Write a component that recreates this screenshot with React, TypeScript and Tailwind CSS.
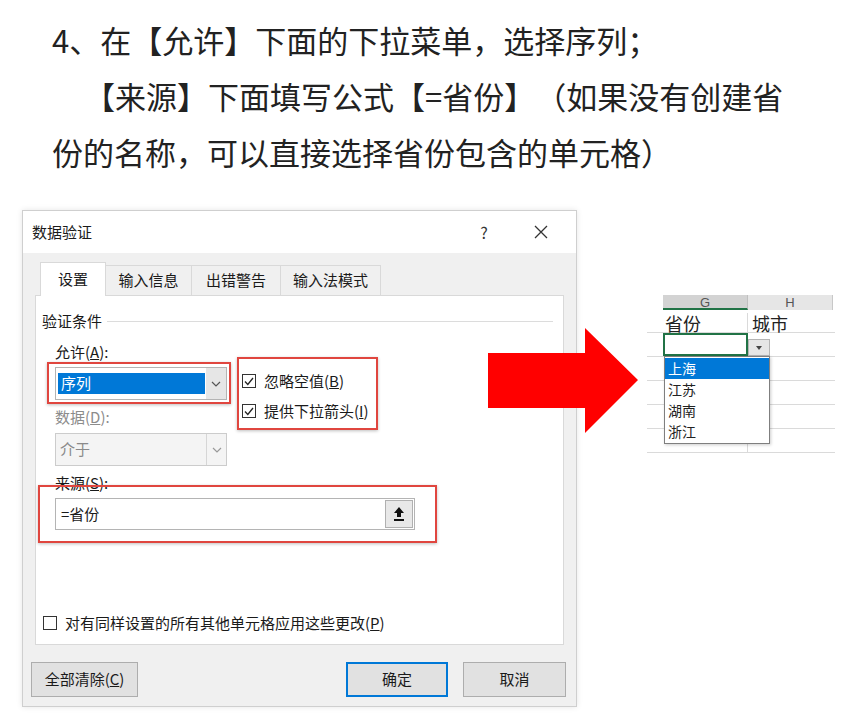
import React from "react";

const sheetRows = [0, 1, 2, 3];
const options = ["上海", "江苏", "湖南", "浙江"];

function Chevron({ color = "#555" }: { color?: string }) {
  return (
    <svg width="10" height="6" viewBox="0 0 10 6" fill="none">
      <path d="M1 1l4 4 4-4" stroke={color} strokeWidth="1.2" />
    </svg>
  );
}

function Check() {
  return (
    <span className="flex h-[14px] w-[14px] items-center justify-center border border-[#333] bg-white">
      <svg width="10" height="9" viewBox="0 0 10 9" fill="none">
        <path d="M1 4.5l2.8 3L9 1" stroke="#222" strokeWidth="1.3" />
      </svg>
    </span>
  );
}

function RedBox({ className }: { className: string }) {
  return (
    <div
      className={`pointer-events-none absolute border-2 border-[#e0463f] shadow-[0_1px_3px_rgba(0,0,0,0.25)] ${className}`}
    />
  );
}

function Dialog() {
  return (
    <div className="ml-[22px] flex h-[497px] w-[555px] shrink-0 flex-col border border-[#cfcfcf] bg-[#f0f0f0] text-[15px] text-[#1a1a1a] shadow-[0_0_6px_rgba(0,0,0,0.1)]">
      <div className="flex h-[42px] shrink-0 items-center bg-white pl-[9px]">
        <span>数据验证</span>
        <span className="ml-auto mr-[32px] w-[20px] text-center text-[16px] text-[#333]">?</span>
        <span className="mr-[20px] flex w-[30px] justify-center">
          <svg width="14" height="14" viewBox="0 0 14 14">
            <path d="M1 1l12 12M13 1L1 13" stroke="#333" strokeWidth="1.3" />
          </svg>
        </span>
      </div>

      <div className="ml-[12px] mt-[9px] w-[529px]">
        <div className="flex h-[33px] items-end pl-[5px]">
          <div className="relative z-10 -mb-px flex h-[34px] w-[66px] items-center justify-center border border-b-0 border-[#d9d9d9] bg-white">
            设置
          </div>
          <div className="flex h-[30px] w-[86px] items-center justify-center border-r border-t border-[#d9d9d9]">
            输入信息
          </div>
          <div className="flex h-[30px] w-[89px] items-center justify-center border-r border-t border-[#d9d9d9]">
            出错警告
          </div>
          <div className="flex h-[30px] w-[100px] items-center justify-center border-r border-t border-[#d9d9d9]">
            输入法模式
          </div>
        </div>

        <div className="flex h-[350px] flex-col border border-[#d9d9d9] bg-white">
          <div className="mt-[15px] flex h-[20px] items-center pl-[6px] pr-[10px]">
            <span>验证条件</span>
            <div className="ml-[5px] h-px flex-1 bg-[#dcdcdc]" />
          </div>

          <div className="mt-[11px] flex pl-[19px]">
            <div className="flex w-[172px] flex-col">
              <div className="flex h-[20px] items-center">
                允许(<span className="underline">A</span>):
              </div>
              <div className="relative mt-[5px]">
                <div className="flex h-[33px] items-center border border-[#b4b4b4] bg-white">
                  <span className="ml-[2px] flex h-[21px] flex-1 items-center bg-[#0078d7] pl-[3px] text-white">
                    序列
                  </span>
                  <span className="ml-[1px] flex w-[20px] items-center justify-center self-stretch bg-[#e6e6e6]">
                    <Chevron />
                  </span>
                </div>
                <RedBox className="-bottom-[4px] -left-[8px] -right-[4px] -top-[5px]" />
              </div>
              <div className="mt-[7px] flex h-[20px] items-center text-[#8c8c8c]">
                数据(<span className="underline">D</span>):
              </div>
              <div className="mt-[6px] flex h-[33px] items-center border border-[#cccccc] bg-[#f4f4f4]">
                <span className="flex-1 pl-[4px] text-[#8a8a8a]">介于</span>
                <span className="flex w-[20px] items-center justify-center self-stretch border-l border-[#d6d6d6]">
                  <Chevron color="#9a9a9a" />
                </span>
              </div>
            </div>

            <div className="relative ml-[15px] mt-[29px] flex h-[50px] w-[130px] flex-col gap-[10px]">
              <div className="flex h-[20px] items-center">
                <Check />
                <span className="ml-[8px]">
                  忽略空值(<span className="underline">B</span>)
                </span>
              </div>
              <div className="flex h-[20px] items-center">
                <Check />
                <span className="ml-[8px]">
                  提供下拉箭头(<span className="underline">I</span>)
                </span>
              </div>
              <RedBox className="-bottom-[9px] -left-[5px] -right-[6px] -top-[14px]" />
            </div>
          </div>

          <div className="mt-[7px] flex h-[20px] items-center pl-[19px]">
            来源(<span className="underline">S</span>):
          </div>
          <div className="relative ml-[19px] mt-[5px] w-[360px]">
            <div className="flex h-[32px] items-center border border-[#b4b4b4] bg-white pr-[1px]">
              <span className="flex-1 pl-[5px]">=省份</span>
              <span className="flex h-[28px] w-[28px] items-center justify-center border border-[#b0b0b0] bg-[#e8e8e8]">
                <svg width="12" height="16" viewBox="0 0 12 16">
                  <path d="M6 1L1 7h3v4h4V7h3z" fill="#111" />
                  <rect x="1" y="13" width="10" height="2" fill="#111" />
                </svg>
              </span>
            </div>
            <RedBox className="-bottom-[13px] -left-[17px] -right-[22px] -top-[13px]" />
          </div>

          <div className="mt-auto mb-[11px] flex h-[20px] items-center pl-[7px]">
            <span className="h-[14px] w-[14px] border border-[#333] bg-white" />
            <span className="ml-[8px]">
              对有同样设置的所有其他单元格应用这些更改(<span className="underline">P</span>)
            </span>
          </div>
        </div>
      </div>

      <div className="ml-[8px] mr-[10px] mt-[17px] flex h-[35px]">
        <button className="w-[107px] border border-[#adadad] bg-[#e1e1e1]">
          全部清除(<span className="underline">C</span>)
        </button>
        <button className="ml-auto w-[102px] border-2 border-[#0078d7] bg-[#e1e1e1]">确定</button>
        <button className="ml-[15px] w-[103px] border border-[#adadad] bg-[#e1e1e1]">取消</button>
      </div>
    </div>
  );
}

function Sheet() {
  return (
    <div className="relative ml-[70px] mt-[85px] w-[188px] text-[#222]">
      <div className="flex h-[15px] font-['Liberation_Sans',sans-serif] text-[13px] leading-[15px] text-[#555]">
        <div className="w-[16px]" />
        <div className="w-[85px] border-b-2 border-r border-[#217346] border-r-[#c0c0c0] bg-[#d3d3d3] text-center">
          G
        </div>
        <div className="w-[85px] border-r border-[#c8c8c8] bg-[#e6e6e6] text-center">H</div>
      </div>
      <div className="flex h-[23px] border-b border-[#dadada] pt-[3px] text-[18px] leading-[20px]">
        <div className="w-[16px]" />
        <div className="w-[85px] border-r border-[#dadada] pl-[2px]">省份</div>
        <div className="pl-[4px]">城市</div>
      </div>
      <div className="flex h-[24px] border-b border-[#dadada]">
        <div className="w-[16px]" />
        <div className="w-[85px] border-2 border-[#217346]" />
        <div className="mt-[6px] flex h-[17px] w-[22px] items-center justify-center border border-[#b5b5b5] bg-[#e6e6e6]">
          <svg width="6" height="4" viewBox="0 0 6 4">
            <path d="M0 0h6L3 4z" fill="#444" />
          </svg>
        </div>
      </div>
      {sheetRows.map((r) => (
        <div key={r} className="flex h-[24px] border-b border-[#dadada]">
          <div className="w-[16px]" />
          <div className="w-[85px] border-r border-[#dadada]" />
        </div>
      ))}

      <div className="absolute left-[17px] top-[61px] w-[106px] border border-[#7f7f7f] bg-white py-px text-[14px] shadow-[1px_1px_3px_rgba(0,0,0,0.2)]">
        {options.map((o, i) => (
          <div
            key={o}
            className={`flex h-[21px] items-center pl-[3px] ${i === 0 ? "bg-[#0078d7] text-white" : ""}`}
          >
            {o}
          </div>
        ))}
      </div>
    </div>
  );
}

export default function App() {
  return (
    <div className="relative h-[722px] w-[850px] overflow-hidden bg-white font-['Noto_Sans_CJK_SC',sans-serif]">
      <div className="pl-[52px] pt-[12px] text-[31px] leading-[56px] text-[#222] [text-spacing-trim:space-all]">
        <p>4、在【允许】下面的下拉菜单，选择序列；</p>
        <p className="pl-[32px]">【来源】下面填写公式【=省份】（如果没有创建省</p>
        <p>份的名称，可以直接选择省份包含的单元格）</p>
      </div>

      <div className="mt-[30px] flex items-start">
        <Dialog />
        <Sheet />
      </div>

      <svg className="absolute left-[488px] top-[328px]" width="151" height="106" viewBox="0 0 151 106">
        <polygon points="0,25 97,25 97,0 150,52 97,105 97,80 0,80" fill="#ff0000" />
      </svg>
    </div>
  );
}
